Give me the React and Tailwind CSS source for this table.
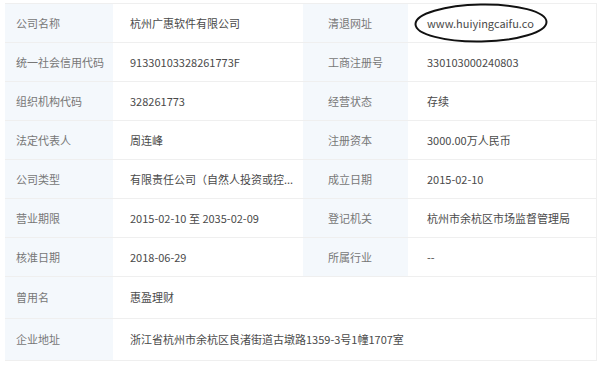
import React from "react";

const rows = [
  { a: "公司名称", b: "杭州广惠软件有限公司", c: "清退网址", d: "www.huiyingcaifu.co", circled: true },
  { a: "统一社会信用代码", b: "91330103328261773F", c: "工商注册号", d: "330103000240803" },
  { a: "组织机构代码", b: "328261773", c: "经营状态", d: "存续" },
  { a: "法定代表人", b: "周连峰", c: "注册资本", d: "3000.00万人民币" },
  { a: "公司类型", b: "有限责任公司（自然人投资或控...", c: "成立日期", d: "2015-02-10" },
  { a: "营业期限", b: "2015-02-10 至 2035-02-09", c: "登记机关", d: "杭州市余杭区市场监督管理局" },
  { a: "核准日期", b: "2018-06-29", c: "所属行业", d: "--" },
];

const wide = [
  { a: "曾用名", b: "惠盈理财" },
  { a: "企业地址", b: "浙江省杭州市余杭区良渚街道古墩路1359-3号1幢1707室" },
];

const App = () => {
  return (
    <div
      className="w-[600px] h-[365px] bg-white pt-[3px] pl-[5px] text-[11px] overflow-hidden"
      style={{ fontFamily: '"Noto Sans CJK SC", "Noto Sans", sans-serif' }}
    >
      <div className="w-[592px] border-t border-r border-[#efefef]">
        {rows.map((r, i) => (
          <div
            key={i}
            className="grid grid-cols-[108px_190px_105px_189px] h-[39px] border-b border-[#efefef]"
          >
            <div className="bg-[#f4f8fc] pl-[11px] flex items-center text-[#777]">{r.a}</div>
            <div className="pl-[17px] flex items-center text-[#4a4a4a] whitespace-nowrap">{r.b}</div>
            <div className="bg-[#f4f8fc] pl-[25px] flex items-center text-[#777]">{r.c}</div>
            <div className="relative pl-[19px] flex items-center text-[#4a4a4a] whitespace-nowrap">
              {r.d}
              {r.circled && (
                <svg
                  className="absolute left-[5px] top-[-2px]"
                  width="136"
                  height="42"
                  viewBox="0 0 136 42"
                >
                  <ellipse
                    cx="68"
                    cy="21"
                    rx="65.5"
                    ry="18.5"
                    fill="none"
                    stroke="#111"
                    strokeWidth="2"
                    transform="rotate(-1 68 21)"
                  />
                </svg>
              )}
            </div>
          </div>
        ))}
        {wide.map((r, i) => (
          <div
            key={i}
            className="grid grid-cols-[108px_484px] h-[42px] border-b border-[#efefef]"
          >
            <div className="bg-[#f4f8fc] pl-[11px] flex items-center text-[#777]">{r.a}</div>
            <div className="pl-[17px] flex items-center text-[#4a4a4a] whitespace-nowrap">{r.b}</div>
          </div>
        ))}
      </div>
    </div>
  );
};

export default App;
